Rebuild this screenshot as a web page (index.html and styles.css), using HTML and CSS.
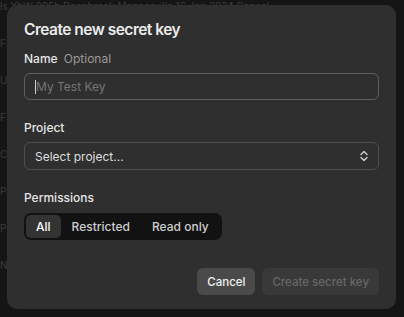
FILE: index.html
```html
<!DOCTYPE html>
<html lang="en">
<head>
  <meta charset="UTF-8">
  <title>Create new secret key</title>
  <link rel="stylesheet" href="styles.css">
</head>
<body>

  <div class="backdrop">
    <div class="row">ls  YbW 095h  Deanbrook  Mapperville  16 Jan 2024  Cancel</div>
    <div class="row">FF</div>
    <div class="row">UL</div>
    <div class="row">FT</div>
    <div class="row">CF</div>
    <div class="row">PC</div>
    <div class="row">PM</div>
    <div class="row">N</div>
  </div>

  <div class="modal">
    <h1>Create new secret key</h1>

    <div class="field">
      <label class="label">Name <span class="hint">Optional</span></label>
      <div class="input"><span class="caret"></span>My Test Key</div>
    </div>

    <div class="field">
      <label class="label">Project</label>
      <div class="input select">
        <span>Select project...</span>
        <svg width="10" height="12" viewBox="0 0 10 12" fill="none" stroke="#cfcfcf" stroke-width="1.4" stroke-linecap="round" stroke-linejoin="round">
          <path d="M2 4.5 L5 1.5 L8 4.5"/>
          <path d="M2 7.5 L5 10.5 L8 7.5"/>
        </svg>
      </div>
    </div>

    <div class="field">
      <label class="label">Permissions</label>
      <div class="segmented">
        <button class="seg active">All</button>
        <button class="seg">Restricted</button>
        <button class="seg">Read only</button>
      </div>
    </div>

    <div class="actions">
      <button class="btn cancel">Cancel</button>
      <button class="btn create" disabled>Create secret key</button>
    </div>
  </div>

</body>
</html>
```

FILE: styles.css
```css
html, body { margin: 0; height: 100%; }
body { background: #151515; font-family: Inter, "Liberation Sans", sans-serif; color: #ececec; position: relative; overflow: hidden; }

.backdrop { padding-top: 1px; color: #3c3c3c; font-size: 10px; line-height: 11px; }
.backdrop .row { height: 37px; white-space: nowrap; }

.modal { position: absolute; left: 7px; top: 5px; width: 389px; height: 304px; box-sizing: border-box; background: #2f2f2f; border-radius: 10px; padding: 14px 17px 0 17px; }
h1 { margin: 0 0 10px 0; font-size: 15.5px; font-weight: 600; letter-spacing: -0.5px; line-height: 22px; }

.field { margin-bottom: 20px; }
.label { display: block; font-size: 12px; font-weight: 500; line-height: 16px; margin-bottom: 6px; color: #e6e6e6; }
.hint { font-weight: 400; color: #9a9a9a; margin-left: 3px; }

.input { height: 27px; box-sizing: border-box; border: 1px solid #5e5e5e; border-radius: 6px; padding: 0 10px; display: flex; align-items: center; font-size: 12px; color: #757575; }
.caret { width: 1px; height: 14px; background: #d0d0d0; }
.select { height: 28px; justify-content: space-between; color: #dedede; border-color: #4e4e4e; padding-right: 9px; }

.segmented { display: inline-flex; background: #121212; border-radius: 7px; padding: 2px; margin-top: 1px; }
.seg { font-family: inherit; font-size: 12px; font-weight: 500; color: #cfcfcf; background: none; border: 0; border-radius: 5px; height: 23px; padding: 0 11px; }
.seg.active { background: #333; color: #fff; padding: 0 10px; }

.actions { display: flex; justify-content: flex-end; gap: 7px; margin-top: 28px; }
.btn { font-family: inherit; font-size: 11.5px; font-weight: 500; height: 27px; border: 0; border-radius: 6px; padding: 0 10px; }
.cancel { background: #4a4a4a; color: #f2f2f2; }
.create { background: #393939; color: #676767; }
```
